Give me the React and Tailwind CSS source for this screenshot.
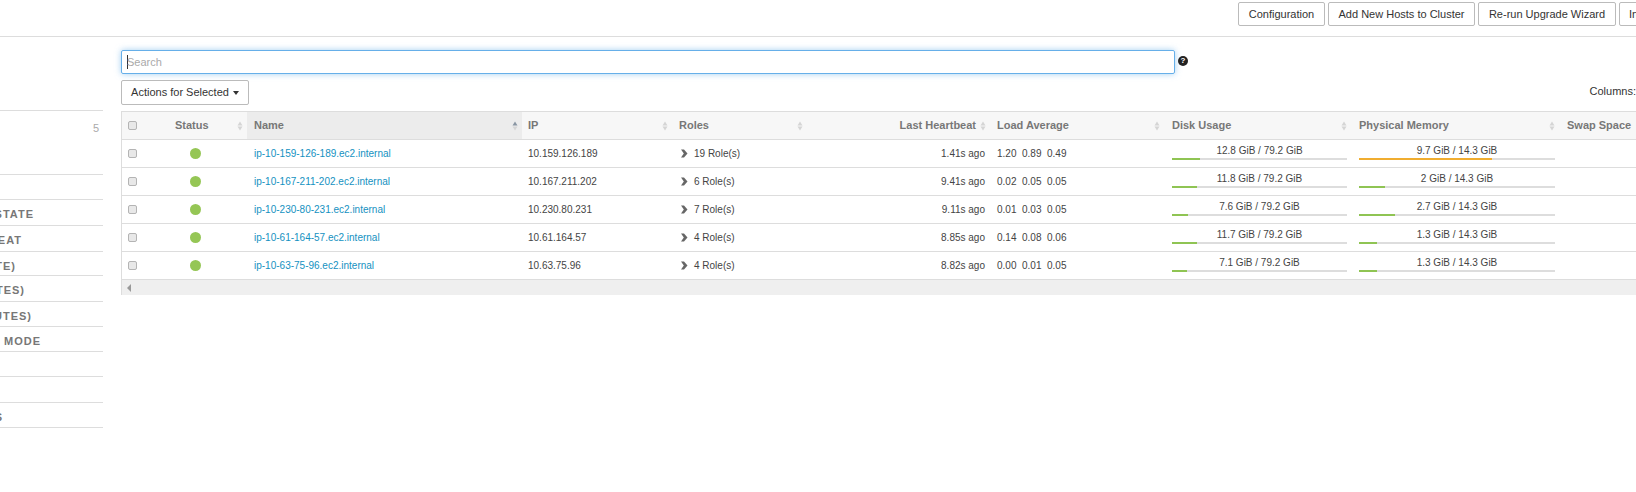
const sidebarRows = [
  { h: "h-[64px]", count: "5" },
  { h: "h-[25px]" },
  { h: "h-[26px]", label: "HEALTH STATE", pr: "pr-[69px]" },
  { h: "h-[26px]", label: "HEARTBEAT", pr: "pr-[81px]" },
  { h: "h-[24px]", label: "LOAD (1 MINUTE)", pr: "pr-[87px]" },
  { h: "h-[26px]", label: "LOAD (5 MINUTES)", pr: "pr-[78px]" },
  { h: "h-[25px]", label: "LOAD (15 MINUTES)", pr: "pr-[71px]" },
  { h: "h-[25px]", label: "MAINTENANCE MODE", pr: "pr-[62px]" },
  { h: "h-[25px]" },
  { h: "h-[26px]" },
  { h: "h-[26px] border-b", label: "ALERTS", pr: "pr-[100px]" },
];

const hosts = [
  { name: "ip-10-159-126-189.ec2.internal", ip: "10.159.126.189", roles: "19 Role(s)", beat: "1.41s ago", load: ["1.20", "0.89", "0.49"], disk: "12.8 GiB / 79.2 GiB", diskPct: 16.1, mem: "9.7 GiB / 14.3 GiB", memPct: 67.8, warn: true },
  { name: "ip-10-167-211-202.ec2.internal", ip: "10.167.211.202", roles: "6 Role(s)", beat: "9.41s ago", load: ["0.02", "0.05", "0.05"], disk: "11.8 GiB / 79.2 GiB", diskPct: 14.3, mem: "2 GiB / 14.3 GiB", memPct: 13.2 },
  { name: "ip-10-230-80-231.ec2.internal", ip: "10.230.80.231", roles: "7 Role(s)", beat: "9.11s ago", load: ["0.01", "0.03", "0.05"], disk: "7.6 GiB / 79.2 GiB", diskPct: 9.1, mem: "2.7 GiB / 14.3 GiB", memPct: 18.3 },
  { name: "ip-10-61-164-57.ec2.internal", ip: "10.61.164.57", roles: "4 Role(s)", beat: "8.85s ago", load: ["0.14", "0.08", "0.06"], disk: "11.7 GiB / 79.2 GiB", diskPct: 14.3, mem: "1.3 GiB / 14.3 GiB", memPct: 9.1 },
  { name: "ip-10-63-75-96.ec2.internal", ip: "10.63.75.96", roles: "4 Role(s)", beat: "8.82s ago", load: ["0.00", "0.01", "0.05"], disk: "7.1 GiB / 79.2 GiB", diskPct: 8.7, mem: "1.3 GiB / 14.3 GiB", memPct: 9.1 },
];

const columns = "grid grid-cols-[125px_275px_150px_135px_183px_174px_187px_208px_200px] w-[1637px]";
const buttonClass = "h-[24px] shrink-0 bg-white border border-[#bbb] rounded-[2px]";

function SortIcon({ active }) {
  return (
    <svg width="6" height="10" viewBox="0 0 6 10" className="shrink-0">
      <path d="M3 0.5 L5.5 4.5 H0.5 Z" fill={active ? "#8a96a3" : "#d5d5d5"} />
      <path d="M3 9.5 L5.5 5.5 H0.5 Z" fill="#d5d5d5" />
    </svg>
  );
}

function Checkbox() {
  return <span className="block shrink-0 w-[9px] h-[9px] bg-[#e8e8e8] border border-[#b4b4b4] rounded-[2px]" />;
}

function Bar({ label, pct, warn }) {
  return (
    <div className="pt-[4px]">
      <div className="h-[14px] leading-[14px] text-center text-[#444]">{label}</div>
      <div className="h-[2px] bg-[#ddd]">
        <div className={`h-[2px] ${warn ? "bg-[#f0ad30]" : "bg-[#8fc453]"}`} style={{ width: `${pct}%` }} />
      </div>
    </div>
  );
}

export default function App() {
  return (
    <div className="w-[1636px] h-[492px] overflow-hidden bg-white text-[11px] text-[#333] font-['Liberation_Sans',Arial,sans-serif]">
      <header className="h-[37px] border-b border-[#ddd] pt-[2px] pl-[1238px] flex gap-[3px] items-start whitespace-nowrap">
        <button className={`${buttonClass} w-[87px]`}>Configuration</button>
        <button className={`${buttonClass} w-[147px]`}>Add New Hosts to Cluster</button>
        <button className={`${buttonClass} w-[138px]`}>Re-run Upgrade Wizard</button>
        <button className={`${buttonClass} w-[100px] pl-[9px] text-left`}>Install Clients</button>
      </header>

      <div className="flex">
        <aside className="w-[103px] shrink-0 pt-[73px]">
          {sidebarRows.map((row, i) => (
            <div
              key={i}
              className={`${row.h} ${row.pr || ""} border-t border-[#ddd] flex justify-end overflow-hidden`}
            >
              {row.count && <span className="mt-[9px] mr-[4px] text-[#aaa]">{row.count}</span>}
              {row.label && (
                <span className="shrink-0 mt-[7px] leading-[14px] whitespace-nowrap font-bold tracking-[1px] text-[#777]">
                  {row.label}
                </span>
              )}
            </div>
          ))}
        </aside>

        <main className="ml-[18px] w-[1515px] shrink-0 pt-[13px]">
          <div className="flex items-center">
            <div className="w-[1054px] h-[24px] border border-[#66afe9] rounded-[2px] shadow-[0_0_6px_rgba(102,175,233,0.6)] pl-[5px] flex items-center">
              <span className="w-px h-[14px] bg-[#333]" />
              <span className="-ml-px text-[#aaa]">Search</span>
            </div>
            <span className="ml-[3px] -mt-[2px] w-[10px] h-[10px] rounded-full bg-[#222] text-white text-[8px] font-bold leading-[10px] text-center">?</span>
          </div>

          <div className="mt-[6px] flex items-center justify-between">
            <button className="w-[128px] h-[25px] bg-white border border-[#bbb] rounded-[2px] flex items-center justify-center gap-[4px]">
              Actions for Selected
              <span className="border-x-[3px] border-x-transparent border-t-[4px] border-t-[#333]" />
            </button>
            <span className="shrink-0 -mt-[2px] whitespace-nowrap">Columns:</span>
          </div>

          <div className="mt-[6px] overflow-hidden border-l border-t border-[#ddd]">
            <div className={`${columns} h-[28px] bg-[#f7f7f7] border-b border-[#ddd] font-bold text-[#777]`}>
              <div className="flex items-center pl-[6px] pr-[4px]">
                <Checkbox />
                <span className="ml-[38px] flex-1">Status</span>
                <SortIcon />
              </div>
              <div className="flex items-center justify-between bg-[#ececec] pl-[7px] pr-[4px]">
                Name <SortIcon active />
              </div>
              <div className="flex items-center justify-between pl-[6px] pr-[4px]">
                IP <SortIcon />
              </div>
              <div className="flex items-center justify-between pl-[7px] pr-[4px]">
                Roles <SortIcon />
              </div>
              <div className="flex items-center justify-end gap-[4px] pr-[4px]">
                Last Heartbeat <SortIcon />
              </div>
              <div className="flex items-center justify-between pl-[7px] pr-[4px]">
                Load Average <SortIcon />
              </div>
              <div className="flex items-center justify-between pl-[8px] pr-[4px]">
                Disk Usage <SortIcon />
              </div>
              <div className="flex items-center justify-between pl-[8px] pr-[4px]">
                Physical Memory <SortIcon />
              </div>
              <div className="flex items-center pl-[8px]">Swap Space</div>
            </div>

            {hosts.map((h) => (
              <div key={h.name} className={`${columns} h-[28px] border-b border-[#ddd] text-[10px]`}>
                <div className="flex items-center pl-[6px]">
                  <Checkbox />
                  <span className="ml-[53px] -mt-px w-[11px] h-[11px] rounded-full bg-[#95c655]" />
                </div>
                <div className="flex items-center pl-[7px] text-[#1491c1]">{h.name}</div>
                <div className="flex items-center pl-[6px] text-[#444]">{h.ip}</div>
                <div className="flex items-center pl-[9px] text-[#444]">
                  <svg width="7" height="9" viewBox="0 0 7 9" className="mr-[6px]">
                    <path d="M0 0.5 H3 L6.5 4.5 L3 8.5 H0 L2.8 4.5 Z" fill="#666" />
                  </svg>
                  {h.roles}
                </div>
                <div className="flex items-center justify-end pr-[5px] text-[#444]">{h.beat}</div>
                <div className="flex items-center pl-[7px] text-[#444]">
                  {h.load.map((v, i) => (
                    <span key={i} className="w-[25px]">{v}</span>
                  ))}
                </div>
                <div className="pl-[8px] pr-[4px]">
                  <Bar label={h.disk} pct={h.diskPct} />
                </div>
                <div className="pl-[8px] pr-[4px]">
                  <Bar label={h.mem} pct={h.memPct} warn={h.warn} />
                </div>
                <div />
              </div>
            ))}

            <div className="h-[15px] bg-[#efefef] flex items-center pl-[5px]">
              <span className="border-y-[4px] border-y-transparent border-r-[4px] border-r-[#999]" />
            </div>
          </div>
        </main>
      </div>
    </div>
  );
}
